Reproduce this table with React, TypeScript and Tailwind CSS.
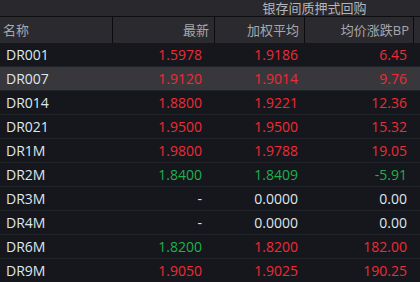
import React from "react";

type Row = { name: string; last: string; avg: string; bp: string; lc: string; ac: string; bc: string; hl?: boolean };

const R = "text-[#ee2b36]";
const G = "text-[#1db14b]";
const W = "text-[#dfe6ee]";

const rows: Row[] = [
  { name: "DR001", last: "1.5978", avg: "1.9186", bp: "6.45", lc: R, ac: R, bc: R },
  { name: "DR007", last: "1.9120", avg: "1.9014", bp: "9.76", lc: R, ac: R, bc: R, hl: true },
  { name: "DR014", last: "1.8800", avg: "1.9221", bp: "12.36", lc: R, ac: R, bc: R },
  { name: "DR021", last: "1.9500", avg: "1.9500", bp: "15.32", lc: R, ac: R, bc: R },
  { name: "DR1M", last: "1.9800", avg: "1.9788", bp: "19.05", lc: R, ac: R, bc: R },
  { name: "DR2M", last: "1.8400", avg: "1.8409", bp: "-5.91", lc: G, ac: G, bc: G },
  { name: "DR3M", last: "-", avg: "0.0000", bp: "0.00", lc: W, ac: W, bc: W },
  { name: "DR4M", last: "-", avg: "0.0000", bp: "0.00", lc: W, ac: W, bc: W },
  { name: "DR6M", last: "1.8200", avg: "1.8200", bp: "182.00", lc: G, ac: R, bc: R },
  { name: "DR9M", last: "1.9050", avg: "1.9025", bp: "190.25", lc: R, ac: R, bc: R },
];

export default function App() {
  return (
    <div
      className="w-[420px] h-[282px] overflow-hidden bg-[#15171c]"
      style={{ fontFamily: '"Open Sans", "Noto Sans CJK SC", sans-serif' }}
    >
      <div className="h-[16px] bg-[#29282d] flex text-[13px] leading-[16px] text-[#b4b5ba]">
        <div className="w-[215px] shrink-0" />
        <div className="w-[199px] shrink-0 text-center">银存间质押式回购</div>
      </div>
      <div className="h-[1px] bg-[#0e0e11]" />
      <div className="h-[26px] bg-[#2b2a2f] flex text-[13px] leading-[26px] text-[#a6a8ad] whitespace-nowrap">
        <div className="w-[113px] shrink-0 pl-[3px] border-r border-[#0c0c0e]">名称</div>
        <div className="w-[102px] shrink-0 pr-[5px] text-right border-r border-[#0c0c0e]">最新</div>
        <div className="w-[90px] shrink-0 pr-[5px] text-right border-r border-[#0c0c0e]">加权平均</div>
        <div className="w-[109px] shrink-0 pr-[4px] text-right border-r border-[#0c0c0e]">均价涨跌BP</div>
        <div className="flex-1" />
      </div>
      {rows.map((r) => (
        <div
          key={r.name}
          className={`h-[24px] flex text-[14px] leading-[23px] border-b border-[#1f2227] whitespace-nowrap ${
            r.hl ? "bg-[#38373c]" : "bg-[#15171c]"
          }`}
        >
          <div className={`w-[113px] shrink-0 pl-[6px] ${W}`}>{r.name}</div>
          <div className={`w-[102px] shrink-0 pr-[13px] text-right ${r.lc}`}>{r.last}</div>
          <div className={`w-[90px] shrink-0 pr-[7px] text-right ${r.ac}`}>{r.avg}</div>
          <div className={`w-[109px] shrink-0 pr-[7px] text-right ${r.bc}`}>{r.bp}</div>
          <div className="flex-1" />
        </div>
      ))}
    </div>
  );
}
